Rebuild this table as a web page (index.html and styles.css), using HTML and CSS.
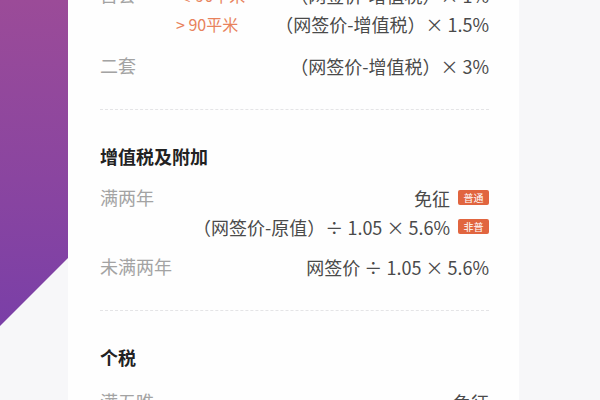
FILE: index.html
```html
<!DOCTYPE html>
<html lang="zh-CN">
<head>
<meta charset="utf-8">
<link rel="stylesheet" href="styles.css">
</head>
<body>
<div class="page">
  <div class="side">
    <div class="corner"></div>
  </div>
  <div class="card">
    <div class="inner">
      <section class="section first">
        <div class="row">
          <div class="label">首套</div>
          <div class="lines">
            <div class="line"><span class="sub">≤&nbsp;90平米</span><span class="val">（网签价-增值税）× 1%</span></div>
            <div class="line"><span class="sub">&gt;&nbsp;90平米</span><span class="val">（网签价-增值税）× 1.5%</span></div>
          </div>
        </div>
        <div class="row">
          <div class="label">二套</div>
          <div class="lines">
            <div class="line"><span class="val">（网签价-增值税）× 3%</span></div>
          </div>
        </div>
      </section>
      <section class="section">
        <h3 class="title">增值税及附加</h3>
        <div class="row">
          <div class="label">满两年</div>
          <div class="lines">
            <div class="line"><span class="val">免征</span><span class="tag">普通</span></div>
            <div class="line"><span class="val">（网签价-原值）÷ 1.05 × 5.6%</span><span class="tag">非普</span></div>
          </div>
        </div>
        <div class="row">
          <div class="label">未满两年</div>
          <div class="lines">
            <div class="line"><span class="val">网签价 ÷ 1.05 × 5.6%</span></div>
          </div>
        </div>
      </section>
      <section class="section last">
        <h3 class="title">个税</h3>
        <div class="row">
          <div class="label">满五唯一</div>
          <div class="lines">
            <div class="line"><span class="val">免征</span></div>
          </div>
        </div>
      </section>
    </div>
  </div>
  <div class="rest"></div>
</div>
</body>
</html>
```

FILE: styles.css
```css
* { box-sizing: border-box; }
html, body { margin: 0; padding: 0; }
body {
  width: 600px;
  height: 400px;
  overflow: hidden;
  background: #f7f7f9;
  font-family: "Noto Sans CJK SC", "Noto Sans", sans-serif;
}
.page {
  display: flex;
  height: 400px;
}
.side {
  width: 68px;
  flex: none;
}
.corner {
  width: 68px;
  height: 326px;
  background: linear-gradient(180deg, #9b4b98 0%, #8a45a0 55%, #7a3fa7 100%);
  clip-path: polygon(0 0, 100% 0, 100% 258px, 0 326px);
}
.card {
  width: 451px;
  flex: none;
  background: #fefefe;
  padding: 0 30px 0 32px;
  overflow: hidden;
}
.inner {
  margin-top: -20px;
}
.section {
  padding: 32px 0 29px;
  border-bottom: 1px dashed #e4e4e6;
}
.section.first { padding-top: 0; }
.section.last { border-bottom: none; }
.title {
  margin: 0 0 12px;
  height: 29px;
  line-height: 29px;
  font-size: 18px;
  font-weight: 700;
  color: #222;
}
.row {
  display: flex;
  margin-top: 11px;
}
.first .row { margin-top: 13px; }
.title + .row, .first .row:first-child { margin-top: 0; }
.last .title { margin-bottom: 15px; }
.label {
  width: 76px;
  flex: none;
  height: 29px;
  line-height: 29px;
  font-size: 18px;
  color: #a3a3a3;
}
.lines {
  flex: 1;
}
.line {
  display: flex;
  align-items: center;
  height: 29px;
}
.sub {
  font-size: 16px;
  color: #e8825c;
}
.val {
  margin-left: auto;
  font-size: 18px;
  color: #4a4a4a;
  white-space: nowrap;
}
.tag {
  margin-left: 8px;
  width: 31px;
  height: 15px;
  line-height: 15px;
  text-align: center;
  font-size: 10px;
  color: #fff;
  background: #e1653f;
  border-radius: 2px;
}
.rest {
  flex: 1;
  background: #f7f7f9;
}
```
